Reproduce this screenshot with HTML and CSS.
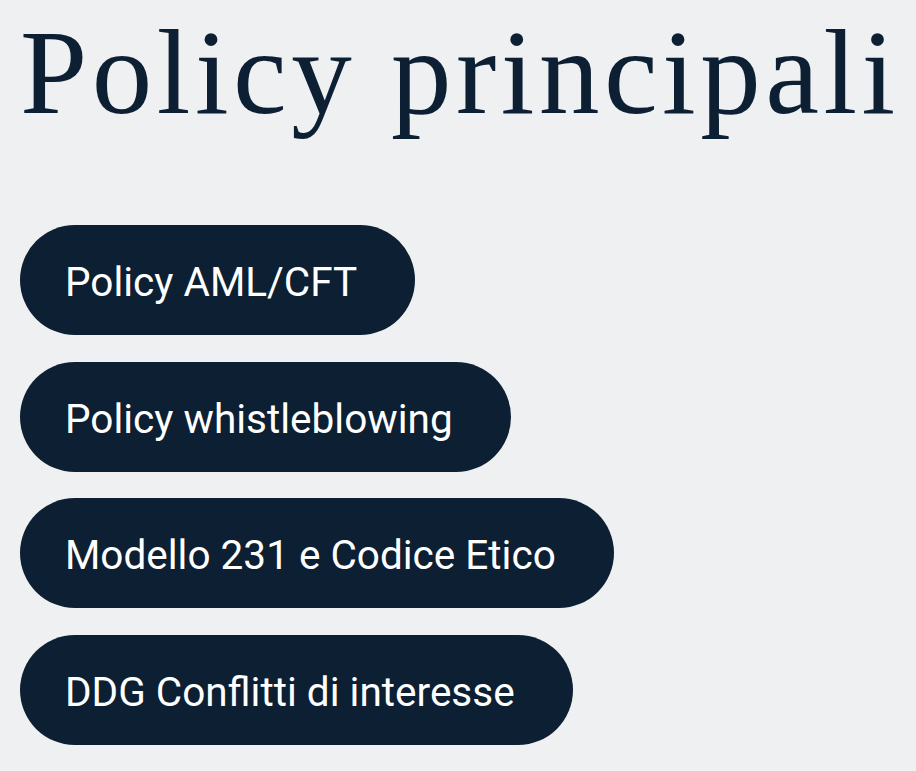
FILE: index.html
```html
<!DOCTYPE html>
<html lang="it">
<head>
<meta charset="utf-8">
<title>Policy principali</title>
<link rel="stylesheet" href="styles.css">
</head>
<body>
<main class="policies">
  <h1 class="policies__title">Policy principali</h1>
  <nav class="policies__list">
    <a class="pill" href="#">Policy AML/CFT</a>
    <a class="pill" href="#">Policy whistleblowing</a>
    <a class="pill" href="#">Modello 231 e Codice Etico</a>
    <a class="pill" href="#">DDG Conflitti di interesse</a>
  </nav>
</main>
</body>
</html>
```

FILE: styles.css
```css
html, body {
  margin: 0;
  padding: 0;
  background: #eff0f2;
}

.policies {
  padding: 12px 0 0 20px;
}

.policies__title {
  margin: 0 0 92px 0;
  font-family: "Liberation Serif", "Times New Roman", serif;
  font-weight: 400;
  font-size: 121px;
  line-height: 1;
  letter-spacing: 4.5px;
  color: #0c1f33;
  white-space: nowrap;
}

.policies__list {
  display: flex;
  flex-direction: column;
  align-items: flex-start;
  gap: 26.5px;
}

.pill {
  display: flex;
  align-items: center;
  height: 110px;
  padding: 4px 58px 0 45px;
  border-radius: 55px;
  background: #0c1f33;
  color: #ffffff;
  text-decoration: none;
  font-family: Roboto, "Liberation Sans", sans-serif;
  font-size: 40.5px;
  box-sizing: border-box;
}
```
